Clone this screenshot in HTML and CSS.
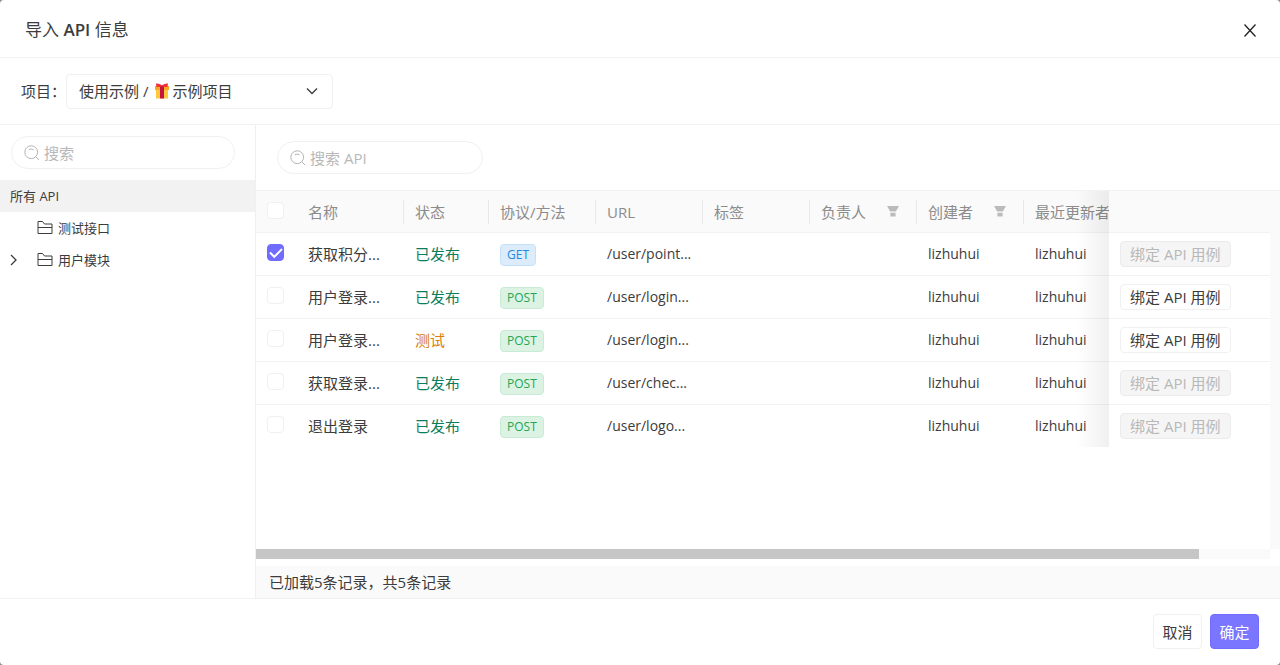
FILE: index.html
```html
<!DOCTYPE html>
<html lang="zh-CN">
<head>
  <meta charset="UTF-8">
  <meta name="viewport" content="width=device-width, initial-scale=1">
  <title>导入 API 信息</title>
  <link rel="stylesheet" href="styles.css">
</head>
<body>
  <!-- Shared icons -->
  <svg class="sprite" aria-hidden="true">
    <symbol id="icon-search" viewBox="0 0 16 16">
      <circle cx="7.2" cy="7.2" r="6.4" />
      <path d="M4.800 4.800Q7.200 3.200 9.600 4.800M12 12l3 3" />
    </symbol>
    <symbol id="icon-folder" viewBox="0 0 16 16">
      <path d="M1 13.500V1.500h4.500l2 2.500h7.500v9.500zM1 7.500h14" />
    </symbol>
    <symbol id="icon-filter" viewBox="0 0 12 11">
      <path d="M0 0h12L8.800 5.600H3.200zM3.400 6.800h5.200v3.600H3.400z" />
    </symbol>
  </svg>

  <div class="dialog" role="dialog" aria-labelledby="title">
    <header class="dialog-header">
      <h1 id="title">导入 <b>API</b> 信息</h1>
      <button class="close" aria-label="关闭">
        <svg viewBox="0 0 12 12"><path d="M.5 0l11 12M11.5 0L.5 12" /></svg>
      </button>
    </header>

    <div class="project">
      <label for="project">项目：</label>
      <div class="select">
        <select id="project">
          <option>使用示例 /&emsp;&ensp;&hairsp;示例项目</option>
        </select>
        <svg class="gift" viewBox="0 0 14 16" aria-hidden="true">
          <path fill="#ffc83d" d="M1 6h12v9.5H1z" />
          <path fill="#f9a825" d="M0 3h14v4H0z" />
          <path fill="#c7143f" d="M5 3h4v12.5H5z" />
          <path fill="#f0323c" d="M1 .5q3-.5 6 1.8Q10 0 13 .5l-.4 3.2q-3 .6-5.6-.4-2.6 1-5.6.4z" />
        </svg>
        <svg class="arrow" viewBox="0 0 12 12" aria-hidden="true"><path d="M1 3.5l5 5 5-5" /></svg>
      </div>
    </div>

    <div class="main">
      <aside class="sidebar">
        <div class="search">
          <svg><use href="#icon-search" /></svg>
          <input type="text" placeholder="搜索" aria-label="搜索">
        </div>
        <ul class="tree">
          <li class="active">所有 API</li>
          <li>
            <span class="toggle"></span>
            <svg class="folder"><use href="#icon-folder" /></svg>
            测试接口
          </li>
          <li>
            <span class="toggle"><svg viewBox="0 0 8 12"><path d="M1 1l5 5-5 5" /></svg></span>
            <svg class="folder"><use href="#icon-folder" /></svg>
            用户模块
          </li>
        </ul>
      </aside>

      <section class="content">
        <div class="toolbar">
          <div class="search">
            <svg><use href="#icon-search" /></svg>
            <input type="text" placeholder="搜索 API" aria-label="搜索 API">
          </div>
        </div>

        <div class="grid">
          <div class="grid-view">
            <table>
              <colgroup>
                <col class="col-check">
                <col class="col-data">
                <col class="col-status">
                <col class="col-data">
                <col class="col-data">
                <col class="col-data">
                <col class="col-data">
                <col class="col-data">
                <col class="col-updater">
                <col class="col-action">
              </colgroup>
              <thead>
                <tr>
                  <th class="check"><input type="checkbox" aria-label="全选"></th>
                  <th><div class="head">名称</div></th>
                  <th><div class="head">状态</div></th>
                  <th><div class="head">协议/方法</div></th>
                  <th><div class="head"><b>URL</b></div></th>
                  <th><div class="head">标签</div></th>
                  <th><div class="head">负责人<svg><use href="#icon-filter" /></svg></div></th>
                  <th><div class="head">创建者<svg><use href="#icon-filter" /></svg></div></th>
                  <th><div class="head">最近更新者</div></th>
                  <th class="action"></th>
                </tr>
              </thead>
              <tbody>
                <tr>
                  <td class="check"><input type="checkbox" aria-label="获取积分" checked></td>
                  <td>获取积分...</td>
                  <td class="published">已发布</td>
                  <td><span class="tag get">GET</span></td>
                  <td class="latin">/user/point...</td>
                  <td></td>
                  <td></td>
                  <td class="latin">lizhuhui</td>
                  <td class="latin">lizhuhui</td>
                  <td class="action"><button disabled>绑定 API 用例</button></td>
                </tr>
                <tr>
                  <td class="check"><input type="checkbox" aria-label="用户登录"></td>
                  <td>用户登录...</td>
                  <td class="published">已发布</td>
                  <td><span class="tag post">POST</span></td>
                  <td class="latin">/user/login...</td>
                  <td></td>
                  <td></td>
                  <td class="latin">lizhuhui</td>
                  <td class="latin">lizhuhui</td>
                  <td class="action"><button>绑定 API 用例</button></td>
                </tr>
                <tr>
                  <td class="check"><input type="checkbox" aria-label="用户登录"></td>
                  <td>用户登录...</td>
                  <td class="testing">测试</td>
                  <td><span class="tag post">POST</span></td>
                  <td class="latin">/user/login...</td>
                  <td></td>
                  <td></td>
                  <td class="latin">lizhuhui</td>
                  <td class="latin">lizhuhui</td>
                  <td class="action"><button>绑定 API 用例</button></td>
                </tr>
                <tr>
                  <td class="check"><input type="checkbox" aria-label="获取登录"></td>
                  <td>获取登录...</td>
                  <td class="published">已发布</td>
                  <td><span class="tag post">POST</span></td>
                  <td class="latin">/user/chec...</td>
                  <td></td>
                  <td></td>
                  <td class="latin">lizhuhui</td>
                  <td class="latin">lizhuhui</td>
                  <td class="action"><button disabled>绑定 API 用例</button></td>
                </tr>
                <tr>
                  <td class="check"><input type="checkbox" aria-label="退出登录"></td>
                  <td>退出登录</td>
                  <td class="published">已发布</td>
                  <td><span class="tag post">POST</span></td>
                  <td class="latin">/user/logo...</td>
                  <td></td>
                  <td></td>
                  <td class="latin">lizhuhui</td>
                  <td class="latin">lizhuhui</td>
                  <td class="action"><button disabled>绑定 API 用例</button></td>
                </tr>
              </tbody>
            </table>
          </div>
          <div class="gutter"></div>
        </div>
        <div class="scrollbar"><div class="thumb"></div></div>
        <div class="status">已加载5条记录，共5条记录</div>
      </section>
    </div>

    <footer class="dialog-footer">
      <button>取消</button>
      <button class="primary">确定</button>
    </footer>
  </div>
</body>
</html>
```
FILE: styles.css
```css
* {
  box-sizing: border-box;
}
body {
  margin: 0;
  background: #8c8c8c;
  color: #3c3c3c;
  font-family: "Open Sans", "Noto Sans CJK SC", sans-serif;
  font-size: 15px;
  line-height: 20px;
}
button, input, select {
  font: inherit;
  color: inherit;
}
button {
  padding: 0;
  border: 1px solid #f0f0f0;
  border-radius: 4px;
  background: #fff;
  cursor: pointer;
}
svg {
  fill: none;
  stroke: currentColor;
  flex: none;
}
b {
  font-weight: 500;
}
.sprite {
  display: none;
}
.dialog {
  display: flex;
  flex-direction: column;
  min-height: 100vh;
  background: #fff;
  border-radius: 4px;
}
.dialog-header {
  display: flex;
  align-items: center;
  justify-content: space-between;
  height: 58px;
  padding: 3px 22px 0 25px;
  border-bottom: 1px solid #f2f2f2;
}
.dialog-header h1 {
  margin: 0;
  font-size: 17px;
  font-weight: 400;
}
.dialog-header b {
  font-weight: 600;
}
.close {
  display: flex;
  align-items: center;
  justify-content: center;
  width: 16px;
  height: 20px;
  border: 0;
}
.close svg {
  width: 12px;
  height: 13px;
  stroke: #222;
  stroke-width: 1.3;
  overflow: visible;
}

/* Project picker */
.project {
  display: flex;
  align-items: center;
  height: 67px;
  padding-left: 21px;
  border-bottom: 1px solid #f2f2f2;
}
.project label {
  width: 45px;
  white-space: nowrap;
}
.select {
  position: relative;
}
.select select {
  appearance: none;
  width: 267px;
  height: 35px;
  padding: 0 32px 0 12px;
  border: 1px solid #f0f0f0;
  border-radius: 4px;
  background: #fff;
}
.select .gift {
  position: absolute;
  top: 9px;
  left: 89px;
  width: 14px;
  height: 16px;
  stroke: none;
}
.select .arrow {
  position: absolute;
  top: 11px;
  right: 15px;
  width: 12px;
  height: 12px;
  stroke-width: 1.3;
}

.main {
  display: flex;
  flex: 1;
}

/* Search boxes */
.search {
  display: flex;
  align-items: center;
  height: 33px;
  padding: 0 12px;
  border: 1px solid #f0f0f0;
  border-radius: 17px;
}
.search svg {
  width: 16px;
  height: 16px;
  color: #b4b4b4;
}
.search input {
  flex: 1;
  min-width: 0;
  padding: 0 0 0 4px;
  border: 0;
  outline: 0;
  background: none;
}
.search input::placeholder {
  color: #b8b8b8;
}

/* Module tree */
.sidebar {
  width: 256px;
  padding-top: 11px;
  border-right: 1px solid #f0f0f0;
  flex: none;
}
.sidebar .search {
  margin: 0 20px 11px 11px;
}
.tree {
  margin: 0;
  padding: 0;
  list-style: none;
  font-size: 13px;
}
.tree li {
  display: flex;
  align-items: center;
  height: 32px;
  padding-left: 10px;
}
.tree .active {
  background: #f2f2f2;
}
.tree .toggle {
  display: flex;
  width: 27px;
}
.tree .toggle svg {
  width: 8px;
  height: 12px;
  stroke-width: 1.3;
}
.tree .folder {
  width: 16px;
  height: 16px;
  margin-right: 5px;
}

/* API list */
.content {
  display: flex;
  flex: 1;
  flex-direction: column;
  min-width: 0;
}
.toolbar {
  padding: 16px 21px;
}
.toolbar .search {
  width: 206px;
}
.grid {
  display: flex;
  flex: 1;
}
.grid-view {
  flex: 1;
  min-width: 0;
  overflow: hidden;
}
.gutter {
  width: 10px;
  border-top: 1px solid #f2f2f2;
  background: #fafafa;
}
table {
  width: 1089px;
  min-width: 100%;
  table-layout: fixed;
  border-spacing: 0;
}
.col-check {
  width: 41px;
}
.col-data {
  width: 107px;
}
.col-status {
  width: 85px;
}
.col-updater {
  width: 160px;
}
.col-action {
  width: 161px;
}
th, td {
  height: 43px;
  padding: 0 0 0 11px;
  border-bottom: 1px solid #f2f2f2;
  text-align: left;
  white-space: nowrap;
}
th {
  border-top: 1px solid #f2f2f2;
  background: #fafafa;
  color: #8c8c8c;
  font-weight: 400;
}
tbody tr:last-child td {
  height: 42px;
  border-bottom: 0;
}
.head {
  display: flex;
  align-items: center;
  justify-content: space-between;
  height: 24px;
  padding-right: 17px;
  border-right: 1px solid #e8e8e8;
}
.head svg {
  width: 12px;
  height: 11px;
  fill: #bbb;
  stroke: none;
}
.latin {
  font-size: 14px;
}
.published {
  color: #0a7d5a;
}
.testing {
  color: #d97f0b;
}
.check input {
  display: block;
  appearance: none;
  width: 17px;
  height: 17px;
  margin: 0 0 3px;
  border: 1px solid #f0f0f0;
  border-radius: 4px;
  background: #fff;
}
.check input:checked {
  display: flex;
  align-items: center;
  justify-content: center;
  border-color: #706cff;
  background: #706cff;
}
.check input:checked::before {
  content: "";
  width: 10px;
  height: 5px;
  margin-bottom: 3px;
  border: solid #fff;
  border-width: 0 0 2px 2px;
  transform: rotate(-45deg);
}
.tag {
  display: inline-block;
  padding: 0 6px;
  border: 1px solid;
  border-radius: 4px;
  font-size: 12px;
}
.get {
  border-color: #c4e1fa;
  background: #dcecfb;
  color: #2389e0;
}
.post {
  border-color: #c8ebd6;
  background: #dcf3e4;
  color: #22a755;
}

/* Pinned column with the shade it casts over the scrolled cells */
.action {
  position: sticky;
  right: 0;
}
td.action {
  background: #fff;
}
.action::before {
  content: "";
  position: absolute;
  top: 0;
  bottom: -1px;
  left: -32px;
  width: 32px;
  background: linear-gradient(to right, rgba(0, 0, 0, 0), rgba(0, 0, 0, .06));
}
tr:last-child td.action::before {
  bottom: 0;
}
.action button {
  display: block;
  height: 26px;
  padding: 0 9px;
}
.action button:disabled {
  border-color: #ebebeb;
  background: #f5f5f5;
  color: #b8b8b8;
  cursor: default;
}
.scrollbar {
  height: 10px;
  margin-right: 10px;
  background: #fafafa;
}
.thumb {
  width: 93%;
  height: 100%;
  background: #c6c6c6;
}
.status {
  height: 32px;
  margin-top: 7px;
  padding: 0 13px;
  background: #fafafa;
  line-height: 32px;
}

.dialog-footer {
  display: flex;
  justify-content: flex-end;
  gap: 8px;
  height: 67px;
  padding: 15px 21px 0 0;
  border-top: 1px solid #f2f2f2;
}
.dialog-footer button {
  width: 49px;
  height: 35px;
}
.dialog-footer .primary {
  border-color: #706cff;
  background: #7a76ff;
  color: #fff;
}
```
